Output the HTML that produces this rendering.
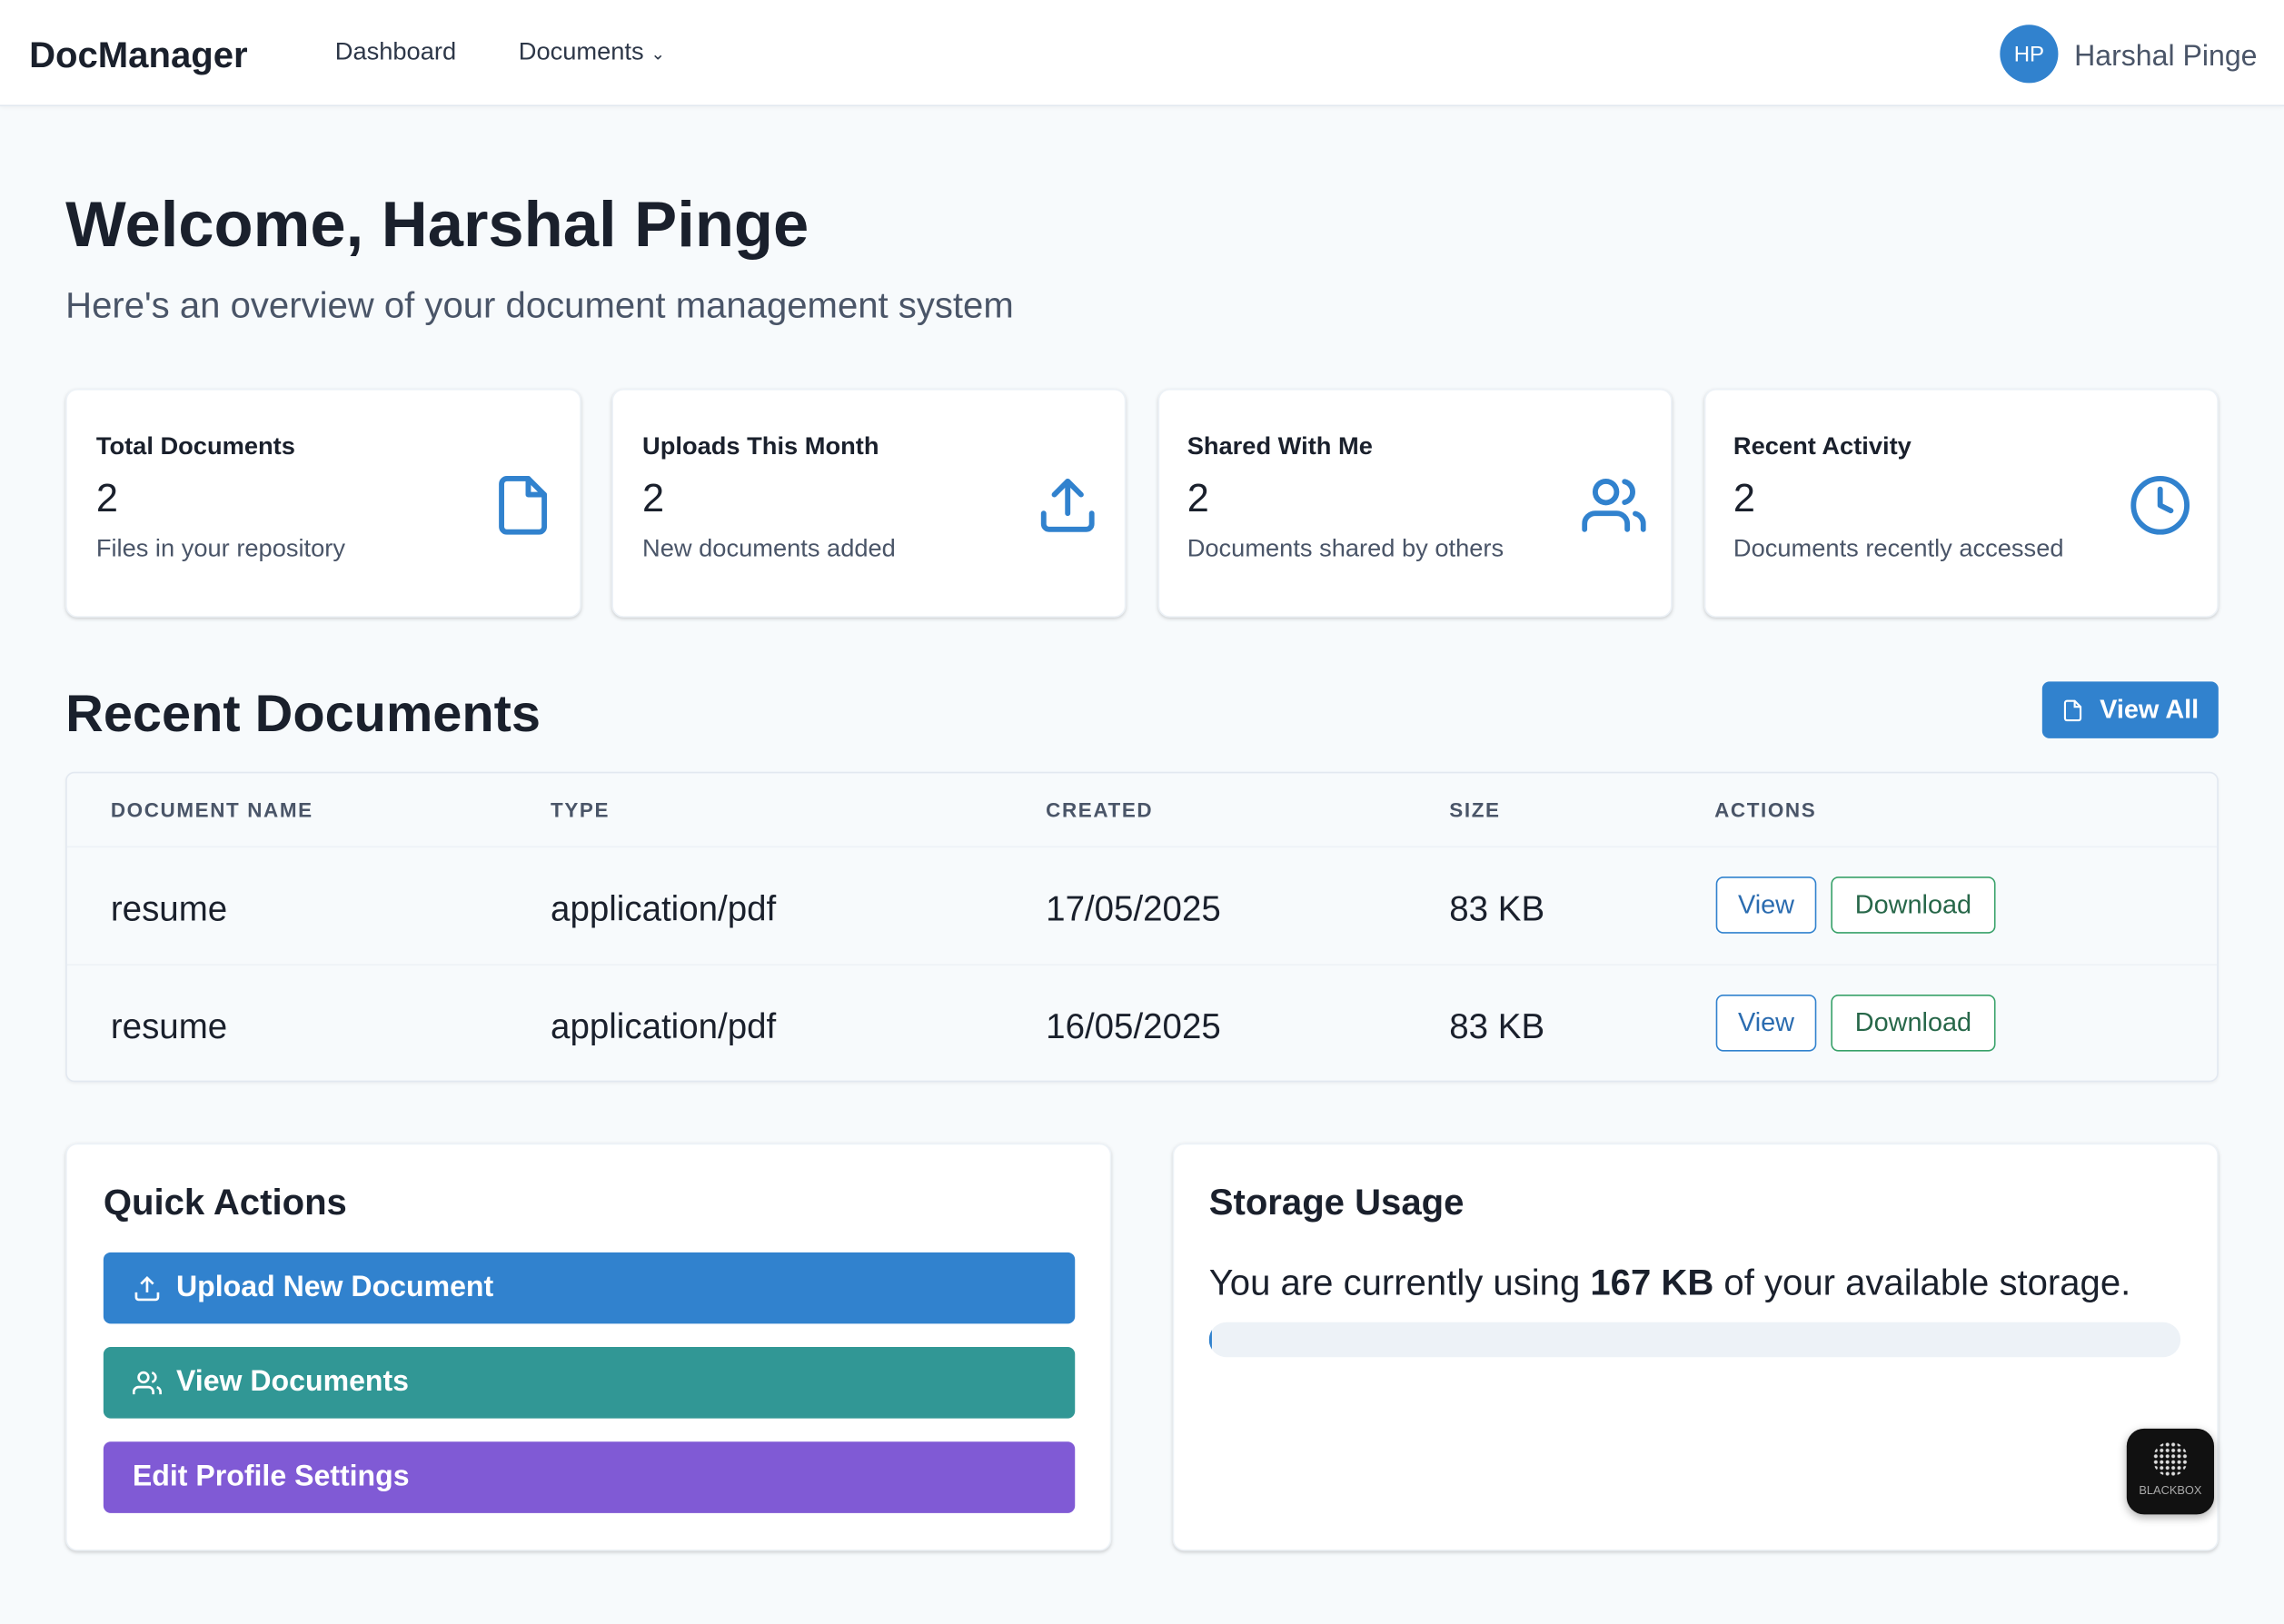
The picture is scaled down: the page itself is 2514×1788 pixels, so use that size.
<!DOCTYPE html>
<html><head><meta charset="utf-8"><style>
*{box-sizing:border-box;margin:0;padding:0}
html,body{width:2514px;height:1788px;overflow:hidden;background:#f7fafc}
#w{width:1568px;height:1115px;transform:scale(1.6033);transform-origin:0 0;position:relative;font-family:"Liberation Sans",sans-serif;color:#1a202c}
.nav{position:absolute;left:0;top:0;width:1568px;height:73px;background:#fff;border-bottom:1px solid #e2e8f0;box-shadow:0 1px 3px rgba(0,0,0,.05)}
.abs{position:absolute;white-space:nowrap}
.card{position:absolute;background:#fff;border-radius:8px;box-shadow:0 1px 3px rgba(0,0,0,.12),0 1px 2px rgba(0,0,0,.06);border:1px solid #edf2f7}
.ct{font-size:17px;font-weight:600;color:#1a202c}
.cn{font-size:27px;color:#1a202c}
.cs{font-size:17px;color:#4a5568}
svg.ic{position:absolute;fill:none;stroke:#3182ce;stroke-width:2;stroke-linecap:round;stroke-linejoin:round}
.th{font-size:14px;font-weight:700;letter-spacing:1px;color:#4a5568;top:548px}
.td{font-size:24px;color:#1a202c}
.btn{position:absolute;border-radius:5px;font-size:18px;display:flex;align-items:center;justify-content:center;background:#fff}
.qa{position:absolute;left:71px;width:667px;height:49px;border-radius:5px;color:#fff;font-size:20px;font-weight:600;display:flex;align-items:center;padding-left:20px}
</style></head><body><div id="w">
<div class="nav">
<div class="abs" style="left:20px;top:24px;font-size:25px;font-weight:700">DocManager</div>
<div class="abs" style="left:230px;top:26px;font-size:17px;color:#2d3748">Dashboard</div>
<div class="abs" style="left:356px;top:26px;font-size:17px;color:#2d3748">Documents <span style="font-size:12px">&#8964;</span></div>
<div class="abs" style="left:1373px;top:17px;width:40px;height:40px;border-radius:50%;background:#3182ce;color:#fff;font-size:15px;display:flex;align-items:center;justify-content:center">HP</div>
<div class="abs" style="left:1424px;top:28px;font-size:20px;color:#4a5568">Harshal Pinge</div>
</div>
<div class="abs" style="left:45px;top:130px;font-size:44px;font-weight:700">Welcome, Harshal Pinge</div>
<div class="abs" style="left:45px;top:196px;font-size:25px;color:#4a5568">Here's an overview of your document management system</div>

<div class="card" style="left:45px;top:267px;width:354px;height:157px"></div>
<div class="card" style="left:420px;top:267px;width:353px;height:157px"></div>
<div class="card" style="left:795px;top:267px;width:353px;height:157px"></div>
<div class="card" style="left:1170px;top:267px;width:353px;height:157px"></div>

<div class="abs ct" style="left:66px;top:297px">Total Documents</div>
<div class="abs ct" style="left:441px;top:297px">Uploads This Month</div>
<div class="abs ct" style="left:815px;top:297px">Shared With Me</div>
<div class="abs ct" style="left:1190px;top:297px">Recent Activity</div>
<div class="abs cn" style="left:66px;top:327px">2</div>
<div class="abs cn" style="left:441px;top:327px">2</div>
<div class="abs cn" style="left:815px;top:327px">2</div>
<div class="abs cn" style="left:1190px;top:327px">2</div>
<div class="abs cs" style="left:66px;top:367px">Files in your repository</div>
<div class="abs cs" style="left:441px;top:367px">New documents added</div>
<div class="abs cs" style="left:815px;top:367px">Documents shared by others</div>
<div class="abs cs" style="left:1190px;top:367px">Documents recently accessed</div>

<svg class="ic" style="left:337px;top:325px" width="44" height="44" viewBox="0 0 24 24" stroke-width="1.6"><path d="M14 2H6a2 2 0 0 0-2 2v16a2 2 0 0 0 2 2h12a2 2 0 0 0 2-2V8z"/><path d="M14 2v6h6"/></svg>
<svg class="ic" style="left:711px;top:325px" width="44" height="44" viewBox="0 0 24 24" stroke-width="1.6"><path d="M21 15v4a2 2 0 0 1-2 2H5a2 2 0 0 1-2-2v-4"/><path d="M17 8l-5-5-5 5"/><path d="M12 3v12"/></svg>
<svg class="ic" style="left:1086px;top:325px" width="44" height="44" viewBox="0 0 24 24" stroke-width="1.6"><path d="M17 21v-2a4 4 0 0 0-4-4H5a4 4 0 0 0-4 4v2"/><circle cx="9" cy="7" r="4"/><path d="M23 21v-2a4 4 0 0 0-3-3.87"/><path d="M16 3.13a4 4 0 0 1 0 7.75"/></svg>
<svg class="ic" style="left:1461px;top:325px" width="44" height="44" viewBox="0 0 24 24" stroke-width="1.6"><circle cx="12" cy="12" r="10"/><path d="M12 6v6l4 2"/></svg>

<div class="abs" style="left:45px;top:469px;font-size:36px;font-weight:700">Recent Documents</div>
<div class="btn" style="left:1402px;top:468px;width:121px;height:39px;background:#3182ce;color:#fff;font-size:18px;font-weight:600"><svg width="16" height="16" viewBox="0 0 24 24" fill="none" stroke="#fff" stroke-width="2" style="margin-right:10px"><path d="M14 2H6a2 2 0 0 0-2 2v16a2 2 0 0 0 2 2h12a2 2 0 0 0 2-2V8z"/><path d="M14 2v6h6"/></svg>View All</div>

<div class="abs" style="left:45px;top:530px;width:1478px;height:213px;background:#f7fafc;border:1px solid #e2e8f0;border-radius:6px;box-shadow:0 1px 2px rgba(0,0,0,.05)"></div>
<div class="abs" style="left:46px;top:581px;width:1476px;height:1px;background:#edf2f7"></div>
<div class="abs" style="left:46px;top:662px;width:1476px;height:1px;background:#edf2f7"></div>
<div class="abs th" style="left:76px">DOCUMENT NAME</div>
<div class="abs th" style="left:378px">TYPE</div>
<div class="abs th" style="left:718px">CREATED</div>
<div class="abs th" style="left:995px">SIZE</div>
<div class="abs th" style="left:1177px">ACTIONS</div>

<div class="abs td" style="left:76px;top:611px">resume</div>
<div class="abs td" style="left:378px;top:611px">application/pdf</div>
<div class="abs td" style="left:718px;top:611px">17/05/2025</div>
<div class="abs td" style="left:995px;top:611px">83 KB</div>
<div class="btn" style="left:1178px;top:602px;width:69px;height:39px;border:1px solid #3182ce;color:#2b6cb0">View</div>
<div class="btn" style="left:1257px;top:602px;width:113px;height:39px;border:1px solid #38a169;color:#276749">Download</div>

<div class="abs td" style="left:76px;top:692px">resume</div>
<div class="abs td" style="left:378px;top:692px">application/pdf</div>
<div class="abs td" style="left:718px;top:692px">16/05/2025</div>
<div class="abs td" style="left:995px;top:692px">83 KB</div>
<div class="btn" style="left:1178px;top:683px;width:69px;height:39px;border:1px solid #3182ce;color:#2b6cb0">View</div>
<div class="btn" style="left:1257px;top:683px;width:113px;height:39px;border:1px solid #38a169;color:#276749">Download</div>

<div class="card" style="left:45px;top:785px;width:718px;height:280px"></div>
<div class="card" style="left:805px;top:785px;width:718px;height:280px"></div>
<div class="abs" style="left:71px;top:812px;font-size:25px;font-weight:700">Quick Actions</div>
<div class="qa" style="top:860px;background:#3182ce"><svg width="20" height="20" viewBox="0 0 24 24" fill="none" stroke="#fff" stroke-width="2" style="margin-right:10px"><path d="M21 15v4a2 2 0 0 1-2 2H5a2 2 0 0 1-2-2v-4"/><path d="M17 8l-5-5-5 5"/><path d="M12 3v12"/></svg>Upload New Document</div>
<div class="qa" style="top:925px;background:#319795"><svg width="20" height="20" viewBox="0 0 24 24" fill="none" stroke="#fff" stroke-width="2" style="margin-right:10px"><path d="M17 21v-2a4 4 0 0 0-4-4H5a4 4 0 0 0-4 4v2"/><circle cx="9" cy="7" r="4"/><path d="M23 21v-2a4 4 0 0 0-3-3.87"/><path d="M16 3.13a4 4 0 0 1 0 7.75"/></svg>View Documents</div>
<div class="qa" style="top:990px;background:#805ad5">Edit Profile Settings</div>

<div class="abs" style="left:830px;top:812px;font-size:25px;font-weight:700">Storage Usage</div>
<div class="abs" style="left:830px;top:867px;font-size:25px;color:#1a202c">You are currently using <b>167 KB</b> of your available storage.</div>
<div class="abs" style="left:830px;top:908px;width:667px;height:24px;border-radius:12px;background:#edf2f7;overflow:hidden"><div style="width:2px;height:24px;background:#3182ce"></div></div>
<div class="abs" style="left:1460px;top:981px;width:60px;height:59px;border-radius:12px;background:#111;box-shadow:0 2px 6px rgba(0,0,0,.3);color:#aaa;font-size:8px;text-align:center;padding-top:38px">BLACKBOX</div>
<div class="abs" style="left:1478px;top:990px;width:24px;height:24px;background:radial-gradient(circle,#ddd 1px,transparent 1.5px) 0 0/4px 4px;border-radius:50%"></div>
</div></body></html>
